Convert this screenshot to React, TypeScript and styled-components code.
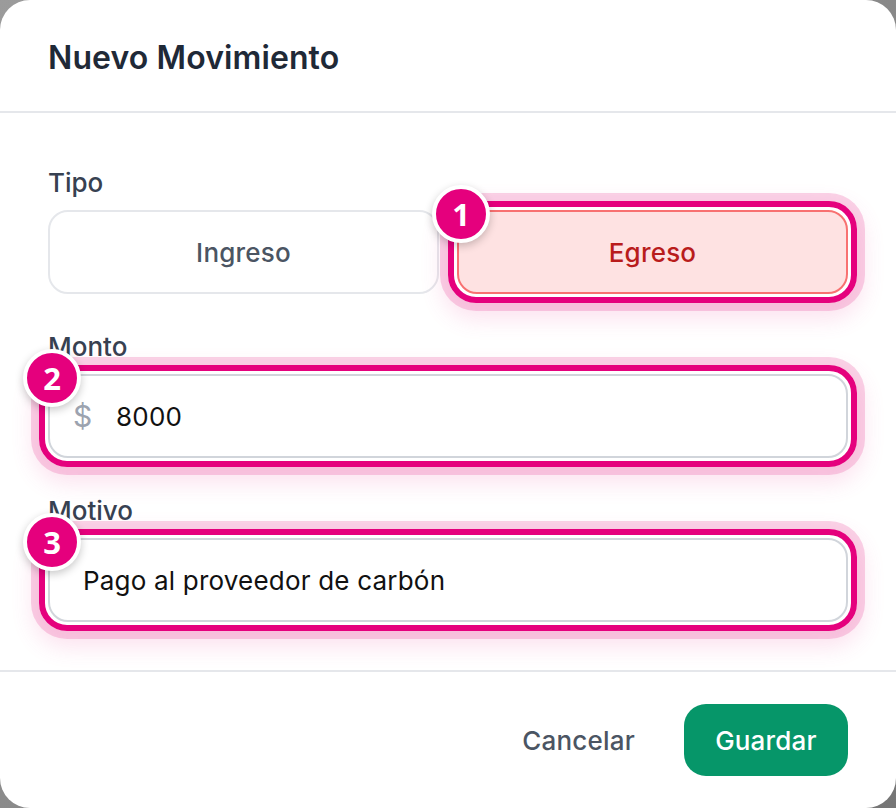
import React from "react";
import styled, { createGlobalStyle } from "styled-components";

const GlobalStyle = createGlobalStyle`
  html, body {
    margin: 0;
    padding: 0;
    width: 896px;
    height: 808px;
    overflow: hidden;
    background: linear-gradient(135deg, #9b9b9b 0%, #8a8a8a 50%, #767676 100%);
    font-family: Inter, "Noto Sans", "Liberation Sans", sans-serif;
  }
  * { box-sizing: border-box; }
`;

const Modal = styled.div`
  width: 896px;
  height: 808px;
  background: #ffffff;
  border-radius: 30px;
  display: flex;
  flex-direction: column;
  overflow: hidden;
`;

const Header = styled.header`
  height: 113px;
  flex: none;
  display: flex;
  align-items: center;
  padding: 4px 48px 0;
  border-bottom: 2px solid #e5e7eb;
`;

const Title = styled.h2`
  margin: 0;
  font-size: 32px;
  font-weight: 600;
  color: #1f2937;
  letter-spacing: 0.1px;
`;

const Body = styled.div`
  flex: 1;
  display: flex;
  flex-direction: column;
  padding: 52px 48px 0;
`;

const Group = styled.div<{ $last?: boolean }>`
  display: flex;
  flex-direction: column;
  margin-bottom: ${(p) => (p.$last ? "0" : "35px")};
`;

const Label = styled.label`
  font-size: 26px;
  line-height: 36px;
  font-weight: 500;
  color: #374151;
  margin-bottom: 9px;
`;

const TypeRow = styled.div`
  display: grid;
  grid-template-columns: 1fr 1fr;
  gap: 18px;
`;

const Spot = styled.div`
  position: relative;
  &::before {
    content: "";
    position: absolute;
    inset: -9px;
    border: 6px solid #e5007d;
    border-radius: 28px;
    box-shadow: 0 0 0 8px rgba(236, 72, 153, 0.24),
      0 10px 22px 6px rgba(236, 72, 153, 0.16);
    pointer-events: none;
    z-index: 1;
  }
`;

const Badge = styled.span`
  position: absolute;
  left: -25px;
  top: -25px;
  width: 58px;
  height: 58px;
  border-radius: 50%;
  background: #e5007d;
  border: 4px solid #ffffff;
  box-shadow: 0 3px 8px rgba(0, 0, 0, 0.22);
  color: #ffffff;
  font-family: "Open Sans", Inter, sans-serif;
  font-weight: 700;
  font-size: 31px;
  line-height: 1;
  display: flex;
  align-items: center;
  justify-content: center;
  z-index: 2;
`;

const TypeButton = styled.button<{ $active?: boolean }>`
  width: 100%;
  height: 84px;
  border-radius: 20px;
  border: 2px solid ${(p) => (p.$active ? "#f87171" : "#e5e7eb")};
  background: ${(p) => (p.$active ? "#fee2e2" : "#ffffff")};
  color: ${(p) => (p.$active ? "#b91c1c" : "#4b5563")};
  font-family: inherit;
  font-size: 26px;
  font-weight: 500;
  letter-spacing: 0.2px;
  display: flex;
  align-items: center;
  justify-content: center;
  padding: 0;
`;

const InputBox = styled.div`
  height: 84px;
  border: 2px solid #d1d5db;
  border-radius: 20px;
  background: #ffffff;
  display: flex;
  align-items: center;
  padding: 0 0 0 33px;
  position: relative;
`;

const Currency = styled.span`
  position: absolute;
  left: 23px;
  top: 50%;
  transform: translateY(-50%);
  font-size: 30px;
  color: #9ca3af;
`;

const Field = styled.input<{ $indent?: boolean }>`
  border: none;
  outline: none;
  background: transparent;
  flex: 1;
  font-family: inherit;
  font-size: 26px;
  letter-spacing: 0.2px;
  color: #111111;
  padding: 0;
  margin-left: ${(p) => (p.$indent ? "33px" : "0")};
`;

const Footer = styled.footer`
  height: 138px;
  flex: none;
  border-top: 2px solid #e5e7eb;
  display: flex;
  align-items: center;
  justify-content: flex-end;
  gap: 25px;
  padding: 0 48px;
`;

const GhostButton = styled.button`
  background: transparent;
  border: none;
  font-family: inherit;
  font-size: 26px;
  font-weight: 500;
  letter-spacing: 0.2px;
  color: #4b5563;
  padding: 0 24px;
  height: 72px;
`;

const PrimaryButton = styled.button`
  background: #069669;
  border: none;
  border-radius: 22px;
  height: 72px;
  width: 164px;
  color: #ffffff;
  font-family: inherit;
  font-size: 26px;
  font-weight: 500;
  letter-spacing: 0.2px;
`;

export default function App() {
  return (
    <>
      <GlobalStyle />
      <Modal>
        <Header>
          <Title>Nuevo Movimiento</Title>
        </Header>
        <Body>
          <Group>
            <Label>Tipo</Label>
            <TypeRow>
              <TypeButton>Ingreso</TypeButton>
              <Spot>
                <Badge>1</Badge>
                <TypeButton $active>Egreso</TypeButton>
              </Spot>
            </TypeRow>
          </Group>
          <Group>
            <Label>Monto</Label>
            <Spot>
              <Badge>2</Badge>
              <InputBox>
                <Currency>$</Currency>
                <Field $indent defaultValue="8000" />
              </InputBox>
            </Spot>
          </Group>
          <Group $last>
            <Label>Motivo</Label>
            <Spot>
              <Badge>3</Badge>
              <InputBox>
                <Field defaultValue="Pago al proveedor de carbón" />
              </InputBox>
            </Spot>
          </Group>
        </Body>
        <Footer>
          <GhostButton>Cancelar</GhostButton>
          <PrimaryButton>Guardar</PrimaryButton>
        </Footer>
      </Modal>
    </>
  );
}
